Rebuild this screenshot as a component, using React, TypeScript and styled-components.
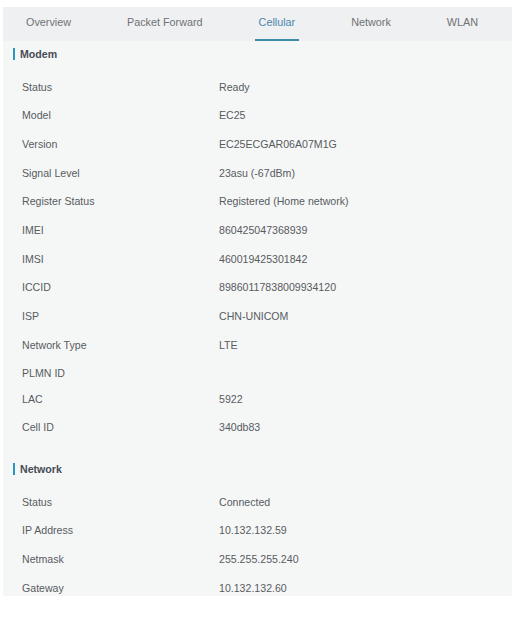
import React from "react";
import styled, { createGlobalStyle } from "styled-components";

const Global = createGlobalStyle`
  html, body { margin: 0; padding: 0; background: #ffffff; }
  body { font-family: "Liberation Sans", Arial, sans-serif; }
`;

const Panel = styled.div`
  margin: 7px 0 0 3px;
  width: 509px;
  height: 589px;
  background: #f5f7f7;
  overflow: hidden;
`;

const TabBar = styled.div`
  display: flex;
  gap: 48px;
  height: 34px;
  padding-left: 19px;
  background: #eef0f1;
  box-sizing: border-box;
`;

const Tab = styled.div<{ $active?: boolean }>`
  box-sizing: border-box;
  height: 34px;
  padding: 0 4px;
  line-height: 30px;
  font-size: 10.8px;
  color: ${(p) => (p.$active ? "#4a87ad" : "#6f7375")};
  border-bottom: 2px solid ${(p) => (p.$active ? "#3b8daa" : "transparent")};
  white-space: nowrap;
`;

const Section = styled.section<{ $first?: boolean }>`
  margin-top: ${(p) => (p.$first ? 0 : 14)}px;
`;

const SectionTitle = styled.div`
  display: flex;
  align-items: center;
  gap: 5px;
  height: 31.5px;
  padding-left: 10px;
  line-height: 26px;
  align-items: flex-start;
  font-size: 10.6px;
  font-weight: bold;
  color: #454c55;
  &::before {
    content: "";
    display: block;
    width: 2px;
    height: 12px;
    margin-top: 7px;
    background: #2c96c2;
  }
`;

const Row = styled.div`
  display: grid;
  grid-template-columns: 197px 1fr;
  padding: 7px 0 3.9px 19px;
  font-size: 10.6px;
  color: #585b5e;
`;

const Label = styled.div`
  line-height: 14.6px;
`;

const Value = styled.div`
  line-height: 14.6px;
  padding-bottom: 3.2px;
  &:empty {
    padding-bottom: 0;
  }
`;

type Item = [string, string];

const modem: Item[] = [
  ["Status", "Ready"],
  ["Model", "EC25"],
  ["Version", "EC25ECGAR06A07M1G"],
  ["Signal Level", "23asu (-67dBm)"],
  ["Register Status", "Registered (Home network)"],
  ["IMEI", "860425047368939"],
  ["IMSI", "460019425301842"],
  ["ICCID", "89860117838009934120"],
  ["ISP", "CHN-UNICOM"],
  ["Network Type", "LTE"],
  ["PLMN ID", ""],
  ["LAC", "5922"],
  ["Cell ID", "340db83"],
];

const network: Item[] = [
  ["Status", "Connected"],
  ["IP Address", "10.132.132.59"],
  ["Netmask", "255.255.255.240"],
  ["Gateway", "10.132.132.60"],
];

const tabs = ["Overview", "Packet Forward", "Cellular", "Network", "WLAN"];

export default function App() {
  return (
    <>
      <Global />
      <Panel>
        <TabBar>
          {tabs.map((t) => (
            <Tab key={t} $active={t === "Cellular"}>
              {t}
            </Tab>
          ))}
        </TabBar>
        <Section $first>
          <SectionTitle>Modem</SectionTitle>
          {modem.map(([k, v]) => (
            <Row key={k}>
              <Label>{k}</Label>
              <Value>{v}</Value>
            </Row>
          ))}
        </Section>
        <Section>
          <SectionTitle>Network</SectionTitle>
          {network.map(([k, v]) => (
            <Row key={k}>
              <Label>{k}</Label>
              <Value>{v}</Value>
            </Row>
          ))}
        </Section>
      </Panel>
    </>
  );
}
